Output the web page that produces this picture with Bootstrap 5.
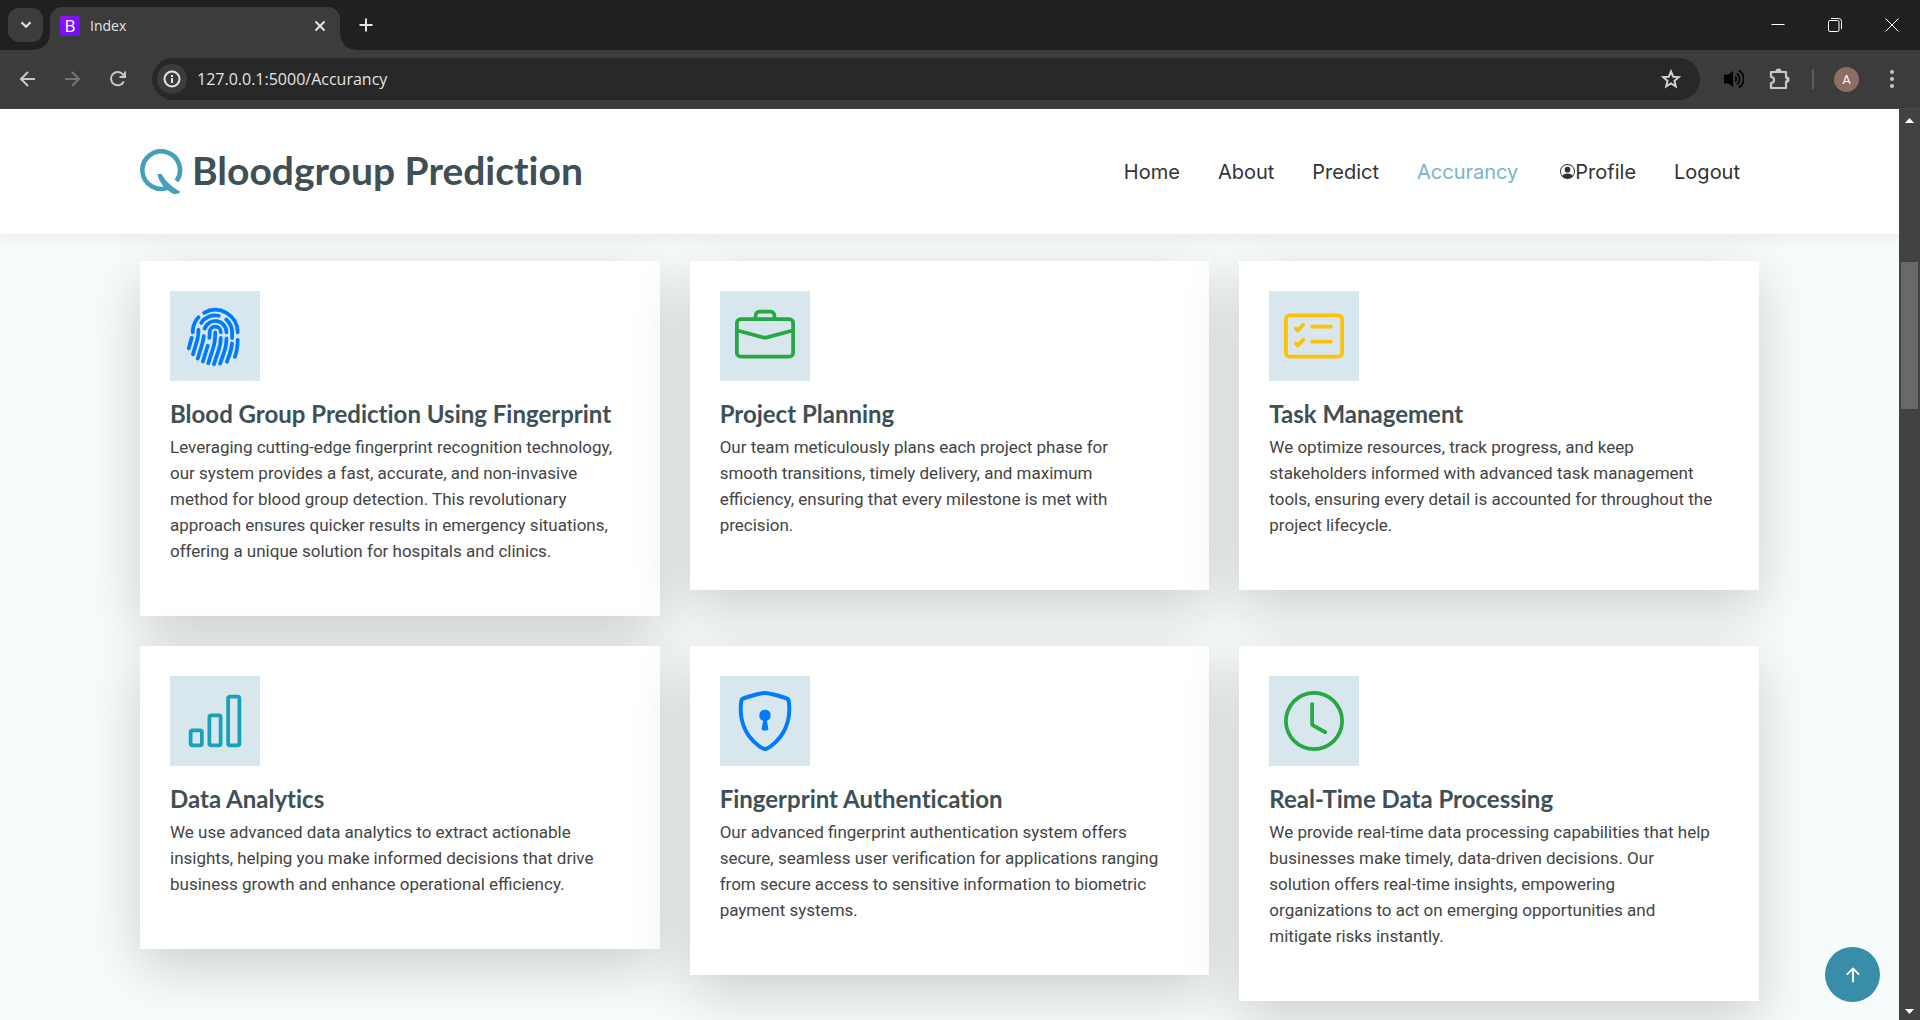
<!DOCTYPE html>
<html lang="en">
<head>
<meta charset="utf-8">
<meta name="viewport" content="width=device-width, initial-scale=1">
<title>Index</title>
<link href="https://cdn.jsdelivr.net/npm/bootstrap@5.3.0/dist/css/bootstrap.min.css" rel="stylesheet">
<style>
  body { font-family: Roboto, sans-serif; font-size: 17px; line-height: 26px; color: #444444; background: #3c3c3c; }
  button { padding: 0; border: 0; background: none; color: inherit; }
  svg { display: block; }

  /* browser frame */
  .tab-strip { height: 50px; background: #1f2120; color: #e3e3e3; font-family: "Open Sans", sans-serif; font-size: 14px; }
  .tab-menu { width: 35px; height: 34px; margin: 0 7px 0 8px; border-radius: 11px; background: #3c3c3c; }
  .page-tab { position: relative; width: 290px; height: 43px; padding: 0 12px 6px 10px; border-radius: 12px 12px 0 0; background: #3c3c3c; }
  .page-tab::before, .page-tab::after { content: ""; position: absolute; bottom: 0; width: 15px; height: 15px; }
  .page-tab::before { right: 100%; background: radial-gradient(circle at 0 0, transparent 14px, #3c3c3c 15px); }
  .page-tab::after { left: 100%; background: radial-gradient(circle at 100% 0, transparent 14px, #3c3c3c 15px); }
  .tab-logo { width: 20px; height: 20px; border-radius: 3px; background: linear-gradient(135deg, #9013fe, #6610f2); color: #fff; font-size: 17px; line-height: 20px; }
  .tab-title { margin-left: 10px; }
  .window-btn { width: 57px; height: 50px; }
  .toolbar { height: 59px; padding: 0 23px 0 17px; background: #3c3c3c; border-bottom: 1px solid #4a474a; color: #c7c7c7; }
  .tool-btn { width: 45px; height: 45px; }
  .address { height: 42px; border-radius: 21px; background: #282828; padding: 0 18px 0 5px; }
  .site-info { width: 30px; height: 30px; border-radius: 50%; background: #3c3c3c; color: #e3e3e3; }
  .address input { border: 0; outline: 0; background: none; color: #e3e3e3; font-family: "Open Sans", sans-serif; font-size: 16px; padding: 0 10px; }
  .avatar { width: 25px; height: 25px; border-radius: 50%; background: #8d6e63; color: #fff; font-size: 13px; }
  .tool-line { width: 2px; height: 20px; margin: 0 20px; background: #5c5c5c; }

  /* page area */
  .browser { height: 100vh; }
  .viewport { background: #f7fbfc; overflow: hidden; position: relative; }
  .scroll-rail { width: 21px; background: #424242; color: #fff; padding: 9px 0 6px; }
  .scroll-thumb { width: 17px; height: 147px; margin-top: 139px; background: #686868; }
  .wrap { width: 100%; max-width: 1649px; padding: 0 15px; margin: 0 auto; }
  .site-header { height: 125px; background: #fff; box-shadow: 0 0 18px rgba(0,0,0,.1); position: relative; z-index: 2; }
  .brand { color: #3e5055; font-family: Lato, sans-serif; font-weight: 700; font-size: 39px; line-height: 46px; text-decoration: none; gap: 9px; }
  .brand span { padding-bottom: 4px; }
  .brand, .feature h2 { font-variant-ligatures: none; }
  .site-nav a { color: #313336; font-family: Inter, sans-serif; font-size: 20px; line-height: 24px; padding: 0 19px; text-decoration: none; }
  .site-nav a.active { color: #76b6cd; }
  .features { padding-top: 27px; }
  .feature-grid { display: grid; grid-template-columns: repeat(3, minmax(0, 1fr)); gap: 30px; align-items: start; }
  .feature { background: #fff; padding: 30px; box-shadow: 0 18px 53px rgba(0,0,0,.175); }
  .feature-icon { width: 90px; height: 90px; margin-bottom: 20px; background: #d7e7ed; }
  .feature h2 { color: #3e5055; font-family: Lato, sans-serif; font-weight: 700; font-size: 24px; line-height: 26px; margin: 0 0 7px; }
  .feature p { margin: 0 0 22px; padding-right: 14px; }
  .ink-blue { color: #007bff; } .ink-green { color: #28a745; } .ink-amber { color: #ffc107; } .ink-teal { color: #17a2b8; }
  .to-top { position: absolute; right: 19px; bottom: 18px; width: 55px; height: 55px; border-radius: 50%; background: #388da8; color: #fff; z-index: 3; }
</style>
<script src="https://cdn.jsdelivr.net/npm/bootstrap@5.3.0/dist/js/bootstrap.bundle.min.js"></script>
</head>
<body>
<div class="browser d-flex flex-column">
  <div class="tab-strip d-flex align-items-center flex-shrink-0">
    <button class="tab-menu d-flex align-items-center justify-content-center" aria-label="Search tabs"><svg width="12" height="8" viewBox="0 0 12 8" fill="none" stroke="currentColor" stroke-width="2"><path d="M1.5 1.2 6 5.8l4.500-4.600"/></svg></button>
    <div class="page-tab d-flex align-items-center align-self-end">
      <span class="tab-logo text-center">B</span>
      <span class="tab-title flex-grow-1">Index</span>
      <button aria-label="Close tab"><svg width="16" height="16" viewBox="0 0 16 16" fill="none" stroke="currentColor" stroke-width="2"><path d="m3.500 3.500 9 9m0-9-9 9"/></svg></button>
    </div>
    <button class="ms-3" aria-label="New tab"><svg width="20" height="20" viewBox="0 0 20 20" fill="none" stroke="currentColor" stroke-width="2"><path d="M10 3.500v13M3.500 10h13"/></svg></button>
    <div class="ms-auto d-flex">
      <button class="window-btn d-flex align-items-center justify-content-center" aria-label="Minimize"><svg width="14" height="14" viewBox="0 0 14 14"><path d="M.5 6.500h13" stroke="#fff"/></svg></button>
      <button class="window-btn d-flex align-items-center justify-content-center" aria-label="Restore"><svg width="14" height="14" viewBox="0 0 14 14" fill="none" stroke="#fff"><rect x=".5" y="2.500" width="10.500" height="11" rx="1.500"/><path d="M3 .5h7.500a3 3 0 0 1 3 3V11"/></svg></button>
      <button class="window-btn d-flex align-items-center justify-content-center" aria-label="Close"><svg width="14" height="14" viewBox="0 0 14 14"><path d="m.5.5 13 13m0-13-13 13" stroke="#fff"/></svg></button>
    </div>
  </div>

  <div class="toolbar d-flex align-items-center flex-shrink-0">
    <button class="tool-btn" aria-label="Back"><svg width="20" height="20" viewBox="0 0 20 20" fill="none" stroke="currentColor" stroke-width="2"><path d="M18 10H4.500M11 3l-7 7 7 7"/></svg></button>
    <button class="tool-btn" aria-label="Forward"><svg width="20" height="20" viewBox="0 0 20 20" fill="none" stroke="#757575" stroke-width="2"><path d="M3 10h13.500M10 3l7 7-7 7"/></svg></button>
    <button class="tool-btn" aria-label="Reload"><svg width="20" height="20" viewBox="0 0 20 20" fill="none" stroke="currentColor" stroke-width="2"><path d="M16.800 12.500A6.700 6.700 0 1 1 16 5.500l1.800 2"/><path d="M18 2.500V8h-5.500"/></svg></button>
    <div class="address d-flex align-items-center flex-grow-1">
      <button class="site-info d-flex align-items-center justify-content-center flex-shrink-0" aria-label="Site information"><svg width="18" height="18" viewBox="0 0 18 18" fill="none" stroke="currentColor" stroke-width="2"><circle cx="9" cy="9" r="7.500"/><path d="M9 8v5M9 5v2"/></svg></button>
      <input class="flex-grow-1" type="text" aria-label="Address" value="127.0.0.1:5000/Accurancy">
      <button aria-label="Bookmark"><svg width="22" height="22" viewBox="0 0 22 22" fill="none" stroke="#d0d0d0" stroke-width="2"><path d="m11 3.500 2.200 5.200 5.600.4-4.300 3.700 1.300 5.500-4.800-2.900-4.800 2.900 1.300-5.500-4.300-3.700 5.600-.4Z"/></svg></button>
    </div>
    <div class="d-flex align-items-center ms-4 flex-shrink-0">
      <svg width="20" height="20" viewBox="0 0 20 20" fill="#000"><path d="M0 5.500h4.500L9 2v16l-4.500-3.500H0Z"/><path d="M11.300 7.500a3.500 3.500 0 0 1 0 5M13 4.500a7 7 0 0 1 0 11M15 1.500a10 10 0 0 1 0 17" fill="none" stroke="#000" stroke-width="1.700"/></svg>
      <button class="ms-4" aria-label="Extensions"><svg width="24" height="22" viewBox="0 0 24 22" fill="none" stroke="currentColor" stroke-width="2.200" stroke-linejoin="round"><path d="M3 4h15v5.500a1.800 1.800 0 0 1 0 4V20H3v-5a2.500 2.500 0 0 0 0-6Z"/><path d="M8.500 3.500a2 2 0 0 1 4 0M18.500 9.500a2 2 0 0 1 0 4" fill="currentColor"/></svg></button>
      <span class="tool-line"></span>
      <button class="avatar lh-1" aria-label="Profile A">A</button>
      <button class="ms-4 ps-1" aria-label="Menu"><svg width="10" height="20" viewBox="0 0 10 20" fill="currentColor"><circle cx="5" cy="3" r="2"/><circle cx="5" cy="10" r="2"/><circle cx="5" cy="17" r="2"/></svg></button>
    </div>
  </div>

  <div class="d-flex flex-grow-1 overflow-hidden">
    <div class="viewport flex-grow-1">
      <header class="site-header d-flex align-items-center">
        <div class="wrap d-flex align-items-center justify-content-between">
          <a class="brand d-flex align-items-center" href="#">
            <svg width="43" height="46" viewBox="0 0 43 46"><path d="M36.500 32A18.800 18.800 0 1 0 29 38.200" fill="none" stroke="#44a0ba" stroke-width="4.600"/><path d="M17.300 25h4.500q1.700 4.500 8.200 10.500 4 4 10.500 7.500-3 3-8 1.500Q20 37.500 17.300 25Z" fill="#44a0ba"/></svg>
            <span>Bloodgroup Prediction</span>
          </a>
          <nav class="site-nav d-flex">
            <a href="#">Home</a>
            <a href="#">About</a>
            <a href="#">Predict</a>
            <a href="#" class="active" aria-current="page">Accurancy</a>
            <a href="#" class="d-flex align-items-center ms-1"><svg width="15" height="15" viewBox="0 0 16 16" fill="currentColor" aria-hidden="true"><path d="M11 6a3 3 0 1 1-6 0 3 3 0 0 1 6 0z"/><path fill-rule="evenodd" d="M0 8a8 8 0 1 1 16 0A8 8 0 0 1 0 8zm8-7a7 7 0 0 0-5.468 11.370C3.242 11.226 4.805 10 8 10s4.757 1.225 5.468 2.370A7 7 0 0 0 8 1z"/></svg>Profile</a>
            <a href="#">Logout</a>
          </nav>
        </div>
      </header>

      <main class="features">
        <div class="wrap feature-grid">
          <article class="feature">
            <div class="feature-icon ink-blue d-flex align-items-center justify-content-center"><svg width="60" height="60" viewBox="0 0 16 16" fill="currentColor"><path d="M8.060 6.500a.5.5 0 0 1 .5.5v.776a11.500 11.500 0 0 1-.552 3.519l-1.331 4.140a.5.5 0 0 1-.952-.305l1.330-4.141a10.500 10.500 0 0 0 .504-3.213V7a.5.5 0 0 1 .5-.5Z"/><path d="M6.060 7a2 2 0 1 1 4 0 .5.5 0 1 1-1 0 1 1 0 1 0-2 0v.332c0 .409-.022.816-.066 1.221A.5.5 0 0 1 6 8.447c.04-.37.06-.742.06-1.115V7Zm3.509 1a.5.5 0 0 1 .487.513 11.500 11.500 0 0 1-.587 3.339l-1.266 3.800a.5.5 0 0 1-.949-.317l1.267-3.800a10.500 10.500 0 0 0 .535-3.048A.5.5 0 0 1 9.569 8Zm-3.356 2.115a.5.5 0 0 1 .33.626L5.240 14.939a.5.5 0 1 1-.955-.296l1.303-4.199a.5.5 0 0 1 .625-.329Z"/><path d="M4.759 5.833A3.501 3.501 0 0 1 11.559 7a.5.5 0 0 1-1 0 2.500 2.500 0 0 0-4.857-.833.5.5 0 1 1-.943-.334Zm.3 1.670a.5.5 0 0 1 .449.546 10.720 10.720 0 0 1-.4 2.031l-1.222 4.072a.5.5 0 1 1-.958-.287L4.150 9.793a9.720 9.720 0 0 0 .363-1.842.5.5 0 0 1 .546-.449Zm6 .647a.5.5 0 0 1 .5.5c0 1.280-.213 2.552-.632 3.762l-1.090 3.145a.5.5 0 0 1-.944-.327l1.089-3.145c.382-1.105.578-2.266.578-3.435a.5.5 0 0 1 .5-.5Z"/><path d="M3.902 4.222a4.996 4.996 0 0 1 5.202-2.113.5.5 0 0 1-.208.979 3.996 3.996 0 0 0-4.163 1.690.5.5 0 0 1-.831-.556Zm6.720-.955a.5.5 0 0 1 .705-.052A4.990 4.990 0 0 1 13.059 7v1.500a.5.5 0 1 1-1 0V7a3.990 3.990 0 0 0-1.386-3.028.5.5 0 0 1-.051-.705ZM3.680 5.842a.5.5 0 0 1 .422.568c-.029.192-.044.39-.044.59 0 .71-.1 1.417-.298 2.100l-1.140 3.923a.5.5 0 1 1-.96-.279L2.800 8.821A6.531 6.531 0 0 0 3.058 7c0-.25.019-.496.054-.736a.5.5 0 0 1 .568-.422Zm8.882 3.660a.5.5 0 0 1 .456.54c-.084 1-.298 1.986-.64 2.934l-.744 2.068a.5.5 0 0 1-.941-.338l.745-2.070a10.510 10.510 0 0 0 .584-2.678.5.5 0 0 1 .54-.456Z"/><path d="M4.810 1.370A6.500 6.500 0 0 1 14.560 7a.5.5 0 1 1-1 0 5.500 5.500 0 0 0-8.250-4.765.5.5 0 0 1-.5-.865Zm-.89 1.257a.5.5 0 0 1 .04.706A5.478 5.478 0 0 0 2.560 7a.5.5 0 0 1-1 0c0-1.664.626-3.184 1.655-4.333a.5.5 0 0 1 .706-.04ZM1.915 8.020a.5.5 0 0 1 .346.616l-.779 2.767a.5.5 0 1 1-.962-.27l.778-2.767a.5.5 0 0 1 .617-.346Zm12.150.481a.5.5 0 0 1 .49.51c-.03 1.499-.161 3.025-.727 4.533l-.07.187a.5.5 0 0 1-.936-.351l.07-.187c.506-1.350.634-2.740.663-4.202a.5.5 0 0 1 .51-.49Z"/></svg></div>
            <h2>Blood Group Prediction Using Fingerprint</h2>
            <p>Leveraging cutting-edge fingerprint recognition technology, our system provides a fast, accurate, and non-invasive method for blood group detection. This revolutionary approach ensures quicker results in emergency situations, offering a unique solution for hospitals and clinics.</p>
          </article>
          <article class="feature">
            <div class="feature-icon ink-green d-flex align-items-center justify-content-center"><svg width="60" height="60" viewBox="0 0 16 16" fill="currentColor"><path d="M6.500 1A1.500 1.500 0 0 0 5 2.500V3H1.500A1.500 1.500 0 0 0 0 4.500v8A1.500 1.500 0 0 0 1.500 14h13a1.500 1.500 0 0 0 1.500-1.500v-8A1.500 1.500 0 0 0 14.500 3H11v-.5A1.500 1.500 0 0 0 9.500 1h-3zm0 1h3a.5.5 0 0 1 .5.5V3H6v-.5a.5.5 0 0 1 .5-.5zm1.886 6.914L15 7.151V12.500a.5.5 0 0 1-.5.5h-13a.5.5 0 0 1-.5-.5V7.150l6.614 1.764a1.500 1.500 0 0 0 .772 0zM1.500 4h13a.5.5 0 0 1 .5.5v1.616L8.129 7.948a.5.5 0 0 1-.258 0L1 6.116V4.500a.5.5 0 0 1 .5-.5z"/></svg></div>
            <h2>Project Planning</h2>
            <p>Our team meticulously plans each project phase for smooth transitions, timely delivery, and maximum efficiency, ensuring that every milestone is met with precision.</p>
          </article>
          <article class="feature">
            <div class="feature-icon ink-amber d-flex align-items-center justify-content-center"><svg width="60" height="60" viewBox="0 0 16 16" fill="currentColor"><path d="M14.500 3a.5.5 0 0 1 .5.5v9a.5.5 0 0 1-.5.5h-13a.5.5 0 0 1-.5-.5v-9a.5.5 0 0 1 .5-.5h13zm-13-1A1.500 1.500 0 0 0 0 3.500v9A1.500 1.500 0 0 0 1.500 14h13a1.500 1.500 0 0 0 1.500-1.500v-9A1.500 1.500 0 0 0 14.500 2h-13z"/><path d="M7 5.500a.5.5 0 0 1 .5-.5h5a.5.5 0 0 1 0 1h-5a.5.5 0 0 1-.5-.5zm-1.496-.854a.5.5 0 0 1 0 .708l-1.500 1.500a.5.5 0 0 1-.708 0l-.5-.5a.5.5 0 1 1 .708-.708l.146.147 1.146-1.147a.5.5 0 0 1 .708 0zM7 9.500a.5.5 0 0 1 .5-.5h5a.5.5 0 0 1 0 1h-5a.5.5 0 0 1-.5-.5zm-1.496-.854a.5.5 0 0 1 0 .708l-1.500 1.500a.5.5 0 0 1-.708 0l-.5-.5a.5.5 0 0 1 .708-.708l.146.147 1.146-1.147a.5.5 0 0 1 .708 0z"/></svg></div>
            <h2>Task Management</h2>
            <p>We optimize resources, track progress, and keep stakeholders informed with advanced task management tools, ensuring every detail is accounted for throughout the project lifecycle.</p>
          </article>
          <article class="feature">
            <div class="feature-icon ink-teal d-flex align-items-center justify-content-center"><svg width="60" height="60" viewBox="0 0 16 16" fill="currentColor"><path d="M4 11H2v3h2v-3zm5-4H7v7h2V7zm5-5v12h-2V2h2zm-2-1a1 1 0 0 0-1 1v12a1 1 0 0 0 1 1h2a1 1 0 0 0 1-1V2a1 1 0 0 0-1-1h-2zM6 7a1 1 0 0 1 1-1h2a1 1 0 0 1 1 1v7a1 1 0 0 1-1 1H7a1 1 0 0 1-1-1V7zm-5 4a1 1 0 0 1 1-1h2a1 1 0 0 1 1 1v3a1 1 0 0 1-1 1H2a1 1 0 0 1-1-1v-3z"/></svg></div>
            <h2>Data Analytics</h2>
            <p>We use advanced data analytics to extract actionable insights, helping you make informed decisions that drive business growth and enhance operational efficiency.</p>
          </article>
          <article class="feature">
            <div class="feature-icon ink-blue d-flex align-items-center justify-content-center"><svg width="60" height="60" viewBox="0 0 16 16" fill="currentColor"><path d="M5.338 1.590a61.440 61.440 0 0 0-2.837.856.481.481 0 0 0-.328.39c-.554 4.157.726 7.190 2.253 9.188a10.725 10.725 0 0 0 2.287 2.233c.346.244.652.42.893.533.12.057.218.095.293.118a.55.55 0 0 0 .101.025.615.615 0 0 0 .1-.025c.076-.023.174-.061.294-.118.24-.113.547-.29.893-.533a10.726 10.726 0 0 0 2.287-2.233c1.527-1.997 2.807-5.031 2.253-9.188a.48.48 0 0 0-.328-.39c-.651-.213-1.750-.56-2.837-.855C9.552 1.290 8.531 1.067 8 1.067c-.53 0-1.552.223-2.662.524zM5.072.56C6.157.265 7.310 0 8 0s1.843.265 2.928.56c1.110.3 2.229.655 2.887.87a1.540 1.540 0 0 1 1.044 1.262c.596 4.477-.787 7.795-2.465 9.990a11.775 11.775 0 0 1-2.517 2.453 7.159 7.159 0 0 1-1.048.625c-.28.132-.581.24-.829.24s-.548-.108-.829-.24a7.158 7.158 0 0 1-1.048-.625 11.777 11.777 0 0 1-2.517-2.453C1.928 10.487.545 7.169 1.141 2.692A1.540 1.540 0 0 1 2.185 1.430 62.456 62.456 0 0 1 5.072.56z"/><path d="M9.500 6.500a1.500 1.500 0 0 1-1 1.415l.385 1.990a.5.5 0 0 1-.491.595h-.788a.5.5 0 0 1-.49-.595l.384-1.990a1.500 1.500 0 1 1 2-1.415z"/></svg></div>
            <h2>Fingerprint Authentication</h2>
            <p>Our advanced fingerprint authentication system offers secure, seamless user verification for applications ranging from secure access to sensitive information to biometric payment systems.</p>
          </article>
          <article class="feature">
            <div class="feature-icon ink-green d-flex align-items-center justify-content-center"><svg width="60" height="60" viewBox="0 0 16 16" fill="currentColor"><path d="M8 3.500a.5.5 0 0 0-1 0V9a.5.5 0 0 0 .252.434l3.500 2a.5.5 0 0 0 .496-.868L8 8.710V3.500z"/><path d="M8 16A8 8 0 1 0 8 0a8 8 0 0 0 0 16zm7-8A7 7 0 1 1 1 8a7 7 0 0 1 14 0z"/></svg></div>
            <h2>Real-Time Data Processing</h2>
            <p>We provide real-time data processing capabilities that help businesses make timely, data-driven decisions. Our solution offers real-time insights, empowering organizations to act on emerging opportunities and mitigate risks instantly.</p>
          </article>
        </div>
      </main>
      <a class="to-top d-flex align-items-center justify-content-center" href="#" aria-label="Back to top"><svg width="30" height="30" viewBox="0 0 16 16" fill="currentColor"><path fill-rule="evenodd" d="M8 12a.5.5 0 0 0 .5-.5V5.707l2.146 2.147a.5.5 0 0 0 .708-.708l-3-3a.5.5 0 0 0-.708 0l-3 3a.5.5 0 1 0 .708.708L7.500 5.707V11.500a.5.5 0 0 0 .5.5z"/></svg></a>
    </div>
    <div class="scroll-rail d-flex flex-column align-items-center flex-shrink-0">
      <svg width="9" height="5" viewBox="0 0 9 5" fill="currentColor"><path d="M0 5 4.500 0 9 5Z"/></svg>
      <div class="scroll-thumb"></div>
      <svg class="mt-auto" width="9" height="5" viewBox="0 0 9 5" fill="currentColor"><path d="M0 0h9L4.500 5Z"/></svg>
    </div>
  </div>
</div>
</body>
</html>
